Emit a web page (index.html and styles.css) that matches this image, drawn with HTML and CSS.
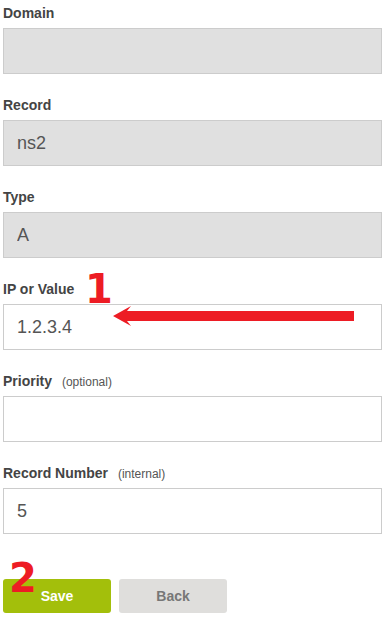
FILE: index.html
```html
<!DOCTYPE html>
<html lang="en">

<head>
  <meta charset="UTF-8" />
  <meta name="viewport" content="width=device-width, initial-scale=1.0" />
  <title>Edit Record</title>
  <link rel="stylesheet" href="styles.css">
</head>

<body>
  <form class="record-form">
    <div class="field">
      <label>Domain</label>
      <input type="text" value="" disabled />
    </div>

    <div class="field">
      <label>Record</label>
      <input type="text" value="ns2" disabled />
    </div>

    <div class="field">
      <label>Type</label>
      <input type="text" value="A" disabled />
    </div>

    <!-- Paso 1: cambiar la IP -->
    <div class="field marked">
      <label>IP or Value</label>
      <input type="text" value="1.2.3.4" />
      <span class="step step-one">1</span>
      <svg class="arrow" width="246" height="22" viewBox="0 0 246 22">
        <path d="M3 11 L21 1 L17 6 L244 6 L244 16 L17 16 L21 21 Z" fill="#ed1c24" />
      </svg>
    </div>

    <div class="field">
      <label>Priority <small>(optional)</small></label>
      <input type="text" value="" />
    </div>

    <div class="field">
      <label>Record Number <small>(internal)</small></label>
      <input type="text" value="5" />
    </div>

    <!-- Paso 2: guardar -->
    <div class="actions">
      <span class="step step-two">2</span>
      <button type="button" class="btn-save">Save</button>
      <button type="button" class="btn-back">Back</button>
    </div>
  </form>
</body>

</html>
```

FILE: styles.css
```css
body {
  margin: 0;
  padding: 0;
  background: #fff;
  font-family: "Liberation Sans", Arial, sans-serif;
}

.record-form {
  padding: 3px 8px 0 3px;
}

.field {
  margin-bottom: 21px;
}

.field label {
  display: block;
  height: 20px;
  font-size: 14px;
  font-weight: bold;
  line-height: 20px;
  color: #444;
  margin-bottom: 5px;
}

.field label small {
  font-size: 12px;
  line-height: 12px;
  font-weight: normal;
  color: #555;
  margin-left: 6px;
}

.field input {
  display: block;
  box-sizing: border-box;
  width: 100%;
  height: 46px;
  margin: 0;
  padding: 0 13px;
  border: 1px solid #ccc;
  border-radius: 0;
  background: #fff;
  font-family: "Liberation Sans", Arial, sans-serif;
  font-size: 18px;
  color: #555;
  outline: none;
}

.field input:disabled {
  background: #e0e0e0;
  color: #555;
}

.marked,
.actions {
  position: relative;
}

.step {
  position: absolute;
  font-family: "DejaVu Sans", sans-serif;
  font-weight: bold;
  font-size: 40px;
  line-height: 40px;
  color: #ed1c24;
}

.step-one {
  top: -10px;
  left: 82px;
}

.arrow {
  position: absolute;
  top: 26px;
  left: 107px;
}

.actions {
  display: flex;
  gap: 8px;
  padding-top: 24px;
}

.actions button {
  width: 108px;
  height: 34px;
  border: none;
  border-radius: 3px;
  font-family: "Liberation Sans", Arial, sans-serif;
  font-size: 14px;
  font-weight: bold;
  cursor: pointer;
}

.actions .step-two {
  top: 3px;
  left: 6px;
  z-index: 1;
}

.btn-save {
  background: #a3bf0b;
  color: #fff;
}

.btn-back {
  background: #dfdedc;
  color: #777;
}
```
